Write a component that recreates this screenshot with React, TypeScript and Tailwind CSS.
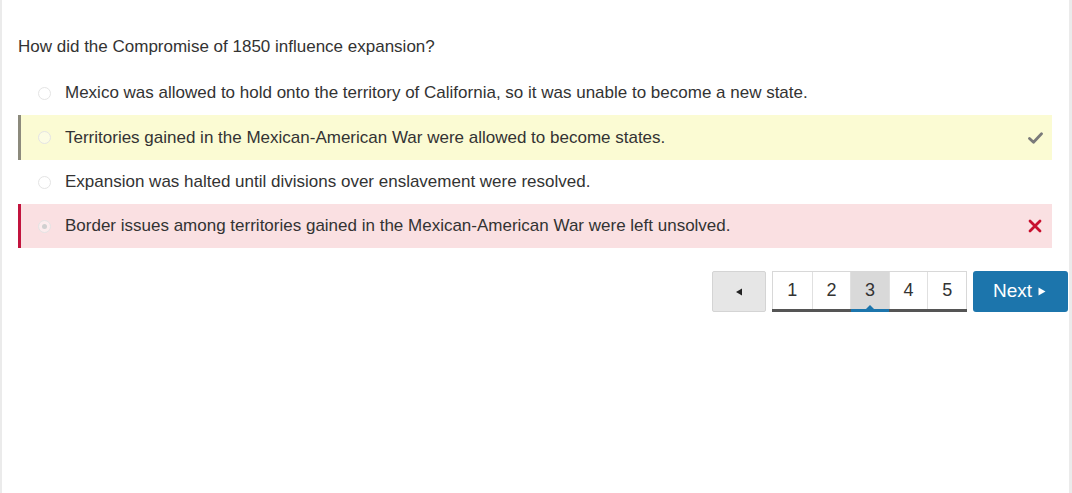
import React from "react";

const options = [
  { text: "Mexico was allowed to hold onto the territory of California, so it was unable to become a new state.", state: "none", h: "h-[44px]" },
  { text: "Territories gained in the Mexican-American War were allowed to become states.", state: "correct", h: "h-[45px]" },
  { text: "Expansion was halted until divisions over enslavement were resolved.", state: "none", h: "h-[44px]" },
  { text: "Border issues among territories gained in the Mexican-American War were left unsolved.", state: "wrong", h: "h-[44px]" },
];

function Radio({ checked }: { checked: boolean }) {
  return (
    <span className="w-[13px] h-[13px] rounded-full border border-[#e4e4e4] bg-white/40 flex items-center justify-center shrink-0">
      {checked && <span className="w-[5px] h-[5px] rounded-full bg-[#d0d0d0]" />}
    </span>
  );
}

export default function App() {
  return (
    <div
      className="w-[1072px] h-[493px] bg-white border-l-2 border-r-[3px] border-[#ebebeb] pl-4 pr-0 text-[#333333]"
      style={{ fontFamily: '"Liberation Sans", Arial, sans-serif' }}
    >
      <div className="pt-[37px] text-[17px] leading-[19px]">How did the Compromise of 1850 influence expansion?</div>
      <div className="mt-[15px] mr-[17px] flex flex-col">
        {options.map((o, i) => {
          const bg =
            o.state === "correct"
              ? "bg-[#fbfbd3] border-l-[3px] border-[#8c8a7c]"
              : o.state === "wrong"
              ? "bg-[#fae0e2] border-l-[3px] border-[#c2143e]"
              : "border-l-[3px] border-transparent";
          return (
            <div key={i} className={`${o.h} flex items-center pl-[17px] pr-[9px] ${bg}`}>
              <Radio checked={o.state === "wrong"} />
              <span className="ml-[14px] text-[17px] flex-1">{o.text}</span>
              {o.state === "correct" && (
                <svg width="15" height="12" viewBox="0 0 15 12">
                  <path d="M1.5 6.5 L5.5 10.2 L13.5 1.8" stroke="#7a7a7a" strokeWidth="2.8" fill="none" strokeLinecap="round" strokeLinejoin="round" />
                </svg>
              )}
              {o.state === "wrong" && (
                <svg width="14" height="14" viewBox="0 0 14 14" className="mr-[1px]">
                  <path d="M2 2 L12 12 M12 2 L2 12" stroke="#c8102e" strokeWidth="2.8" strokeLinecap="round" />
                </svg>
              )}
            </div>
          );
        })}
      </div>
      <div className="mt-[23px] flex justify-end gap-[6px] pr-px">
        <button className="w-[54px] h-[41px] bg-[#e6e6e6] border border-[#d4d4d4] rounded-[2px] flex items-center justify-center">
          <svg width="8" height="8" viewBox="0 0 8 8"><path d="M1 4 L7 0.5 L7 7.5 Z" fill="#222" /></svg>
        </button>
        <div className="relative h-[41px] flex border border-[#d8d8d8] border-b-0">
          {[1, 2, 3, 4, 5].map((n) => (
            <div
              key={n}
              className={`relative w-[38.6px] h-full flex items-center justify-center text-[18px] pb-[3px] ${n > 1 ? "border-l border-[#e0e0e0]" : ""} ${n === 3 ? "bg-[#d9d9d9]" : "bg-white"}`}
            >
              {n}
              {n === 3 && (
                <>
                  <span className="absolute left-0 right-0 bottom-0 h-[3px] bg-[#1c75ac] z-10" />
                  <span className="absolute left-1/2 -translate-x-1/2 bottom-[3px] w-0 h-0 border-l-[4px] border-r-[4px] border-b-[4px] border-l-transparent border-r-transparent border-b-[#1c75ac] z-10" />
                </>
              )}
            </div>
          ))}
          <span className="absolute -left-px -right-px bottom-0 h-[3px] bg-[#555555]" />
        </div>
        <button className="w-[95px] h-[41px] bg-[#1c75ac] rounded-[3px] text-white text-[19px] flex items-center justify-center gap-[6px] pr-[2px]">
          <span>Next</span>
          <svg width="8" height="9" viewBox="0 0 8 9"><path d="M0.5 0.5 L7.5 4.5 L0.5 8.5 Z" fill="#fff" /></svg>
        </button>
      </div>
    </div>
  );
}
